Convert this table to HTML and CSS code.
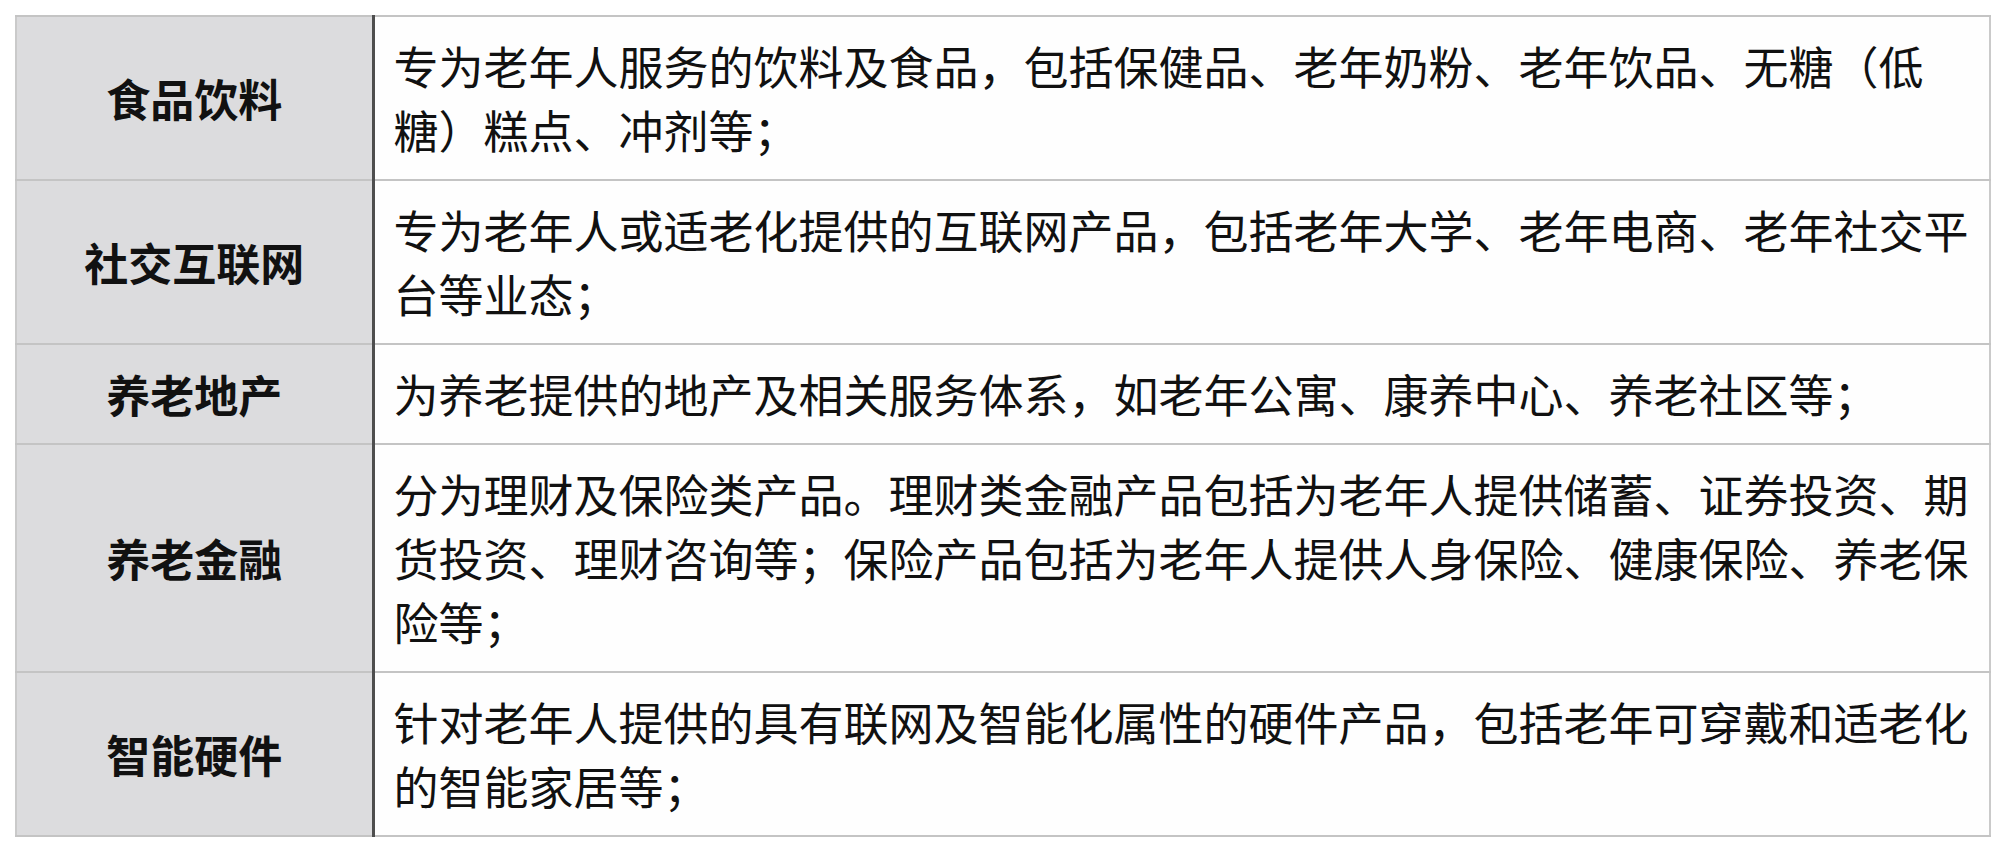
FILE: index.html
```html
<!DOCTYPE html>
<html lang="zh-CN">
<head>
<meta charset="utf-8">
<title>养老产业分类</title>
<link rel="stylesheet" href="styles.css">
</head>
<body>
<table class="grid">
  <colgroup>
    <col class="col-label">
    <col class="col-desc">
  </colgroup>
  <tbody>
    <tr>
      <td class="label">食品饮料</td>
      <td class="desc">专为老年人服务的饮料及食品，包括保健品、老年奶粉、老年饮品、无糖（低<br>糖）糕点、冲剂等；</td>
    </tr>
    <tr>
      <td class="label">社交互联网</td>
      <td class="desc">专为老年人或适老化提供的互联网产品，包括老年大学、老年电商、老年社交平<br>台等业态；</td>
    </tr>
    <tr>
      <td class="label">养老地产</td>
      <td class="desc">为养老提供的地产及相关服务体系，如老年公寓、康养中心、养老社区等；</td>
    </tr>
    <tr>
      <td class="label">养老金融</td>
      <td class="desc">分为理财及保险类产品。理财类金融产品包括为老年人提供储蓄、证券投资、期<br>货投资、理财咨询等；保险产品包括为老年人提供人身保险、健康保险、养老保<br>险等；</td>
    </tr>
    <tr>
      <td class="label">智能硬件</td>
      <td class="desc">针对老年人提供的具有联网及智能化属性的硬件产品，包括老年可穿戴和适老化<br>的智能家居等；</td>
    </tr>
  </tbody>
</table>
</body>
</html>
```

FILE: styles.css
```css
html, body {
  margin: 0;
  padding: 0;
  background: #ffffff;
}

body {
  font-family: "Noto Sans CJK SC", "Noto Sans", sans-serif;
  color: #111111;
}

.grid {
  border-collapse: collapse;
  table-layout: fixed;
  width: 1976px;
  margin: 15px 0 0 15px;
  border: 2px solid #cacaca;
}

.col-label {
  width: 357px;
}

.grid td {
  border-top: 2px solid #c4c4c4;
  border-bottom: 2px solid #c4c4c4;
  vertical-align: middle;
}

.label {
  background: #dcdcde;
  border-right: 3px solid #4e4e4e;
  text-align: center;
  font-size: 44px;
  font-weight: 700;
  line-height: 64px;
  padding: 0;
}

.desc {
  background: #fefefe;
  font-size: 45px;
  line-height: 64px;
  padding: 17px 10px 17px 19px;
  white-space: nowrap;
}
```
